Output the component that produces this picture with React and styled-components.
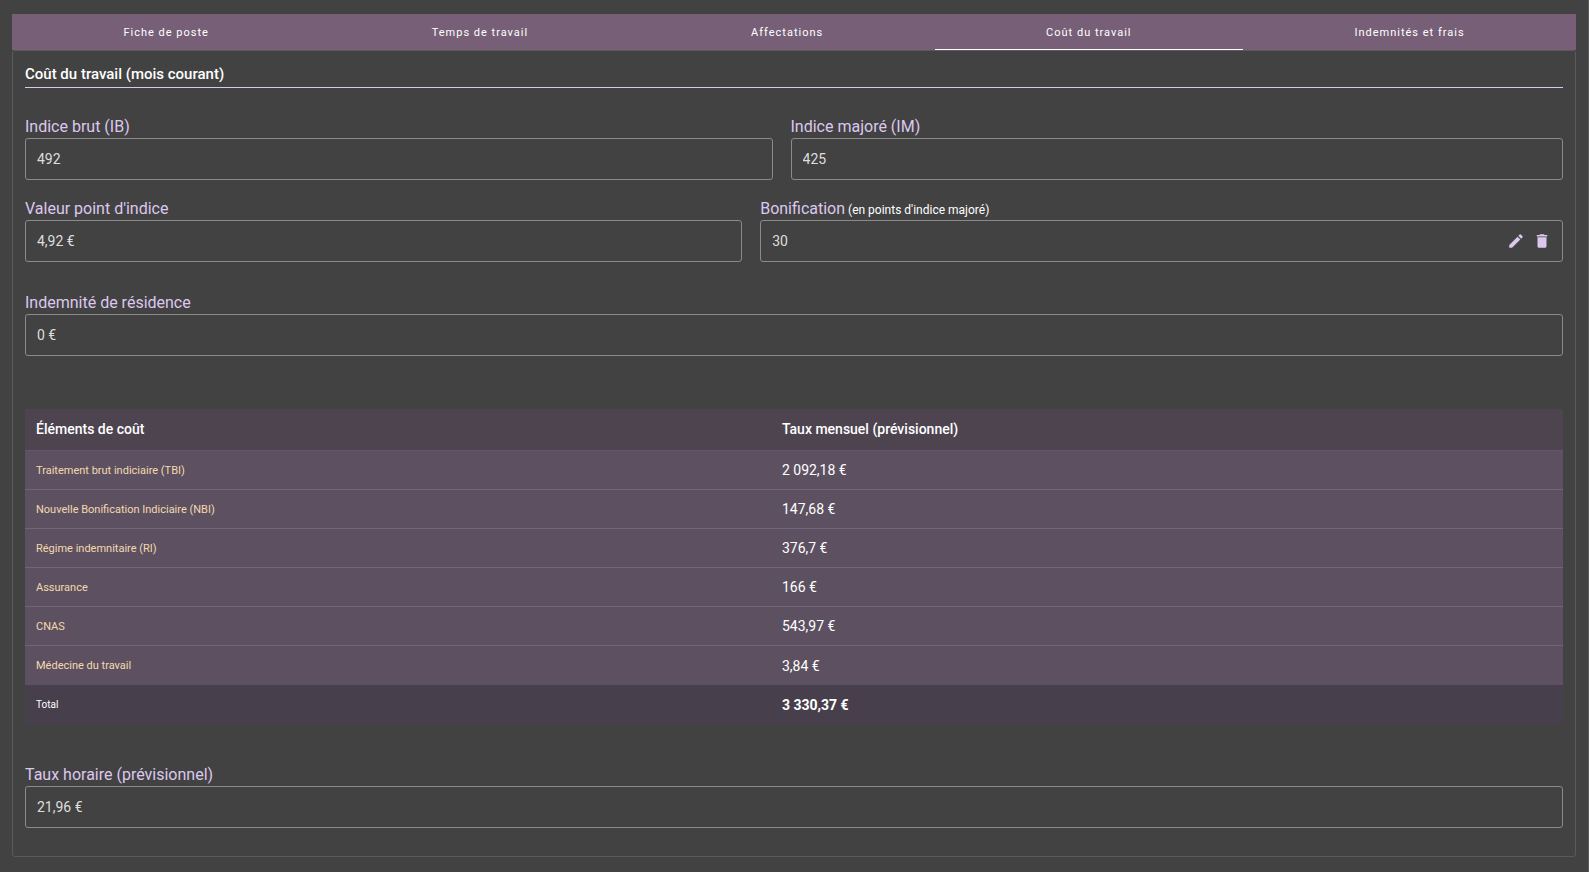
import { useState } from 'react';
import styled, { createGlobalStyle } from 'styled-components';
import { MdDelete, MdEdit } from 'react-icons/md';

const tabs = [
	'Fiche de poste',
	'Temps de travail',
	'Affectations',
	'Coût du travail',
	'Indemnités et frais',
];

const costs = [
	{ name: 'Traitement brut indiciaire (TBI)', amount: '2 092,18 €' },
	{ name: 'Nouvelle Bonification Indiciaire (NBI)', amount: '147,68 €' },
	{ name: 'Régime indemnitaire (RI)', amount: '376,7 €' },
	{ name: 'Assurance', amount: '166 €' },
	{ name: 'CNAS', amount: '543,97 €' },
	{ name: 'Médecine du travail', amount: '3,84 €' },
];

const Field = ({ id, label, hint, value, children }) => {
	return (
		<FieldWrapper>
			<Label htmlFor={id}>
				{label}
				{hint && <Hint> {hint}</Hint>}
			</Label>
			<InputBox>
				<Input id={id} type='text' value={value} readOnly />
				{children}
			</InputBox>
		</FieldWrapper>
	);
};

const App = () => {
	const [activeTab, setActiveTab] = useState('Coût du travail');

	return (
		<Wrapper>
			<GlobalStyle />
			<TabBar role='tablist'>
				{tabs.map((tab) => (
					<Tab
						key={tab}
						type='button'
						role='tab'
						aria-selected={tab === activeTab}
						$active={tab === activeTab}
						onClick={() => setActiveTab(tab)}
					>
						{tab}
					</Tab>
				))}
			</TabBar>
			<Panel role='tabpanel'>
				<Title>Coût du travail (mois courant)</Title>
				<FieldRow>
					<Field id='ib' label='Indice brut (IB)' value='492' />
					<Field id='im' label='Indice majoré (IM)' value='425' />
				</FieldRow>
				<FieldRow>
					<Field id='point' label="Valeur point d'indice" value='4,92 €' />
					<Field
						id='bonification'
						label='Bonification'
						hint="(en points d'indice majoré)"
						value='30'
					>
						<IconButton type='button' aria-label='Modifier'>
							<MdEdit />
						</IconButton>
						<IconButton type='button' aria-label='Supprimer'>
							<MdDelete />
						</IconButton>
					</Field>
				</FieldRow>
				<FieldRow $spaced>
					<Field id='residence' label='Indemnité de résidence' value='0 €' />
				</FieldRow>
				<Table>
					<thead>
						<tr>
							<th scope='col'>Éléments de coût</th>
							<th scope='col'>Taux mensuel (prévisionnel)</th>
						</tr>
					</thead>
					<tbody>
						{costs.map(({ name, amount }) => (
							<tr key={name}>
								<th scope='row'>{name}</th>
								<td>{amount}</td>
							</tr>
						))}
					</tbody>
					<tfoot>
						<tr>
							<th scope='row'>Total</th>
							<td>3 330,37 €</td>
						</tr>
					</tfoot>
				</Table>
				<Field
					id='horaire'
					label='Taux horaire (prévisionnel)'
					value='21,96 €'
				/>
			</Panel>
		</Wrapper>
	);
};

const GlobalStyle = createGlobalStyle`
	* {
		box-sizing: border-box;
	}
	body {
		margin: 0;
		background: #424242;
		color: #fff;
		font-family: Roboto, sans-serif;
		font-size: 14px;
	}
	button,
	input {
		font-family: inherit;
	}
`;

const Wrapper = styled.main`
	min-height: 100vh;
	padding: 14px 12px;
	border-right: 1px solid #5a5a5a;
`;

const TabBar = styled.div`
	display: flex;
	background: #775f77;
`;

const Tab = styled.button`
	flex: 1 1 auto;
	height: 36px;
	padding: 0;
	border: 0;
	box-shadow: ${({ $active }) => ($active ? 'inset 0 -1px #fff' : 'none')};
	background: transparent;
	color: #fff;
	font-size: 11px;
	font-weight: 400;
	letter-spacing: 1px;
	cursor: pointer;
`;

const Panel = styled.section`
	padding: 12px 12px 28px;
	border: 1px solid #5a5a5a;
	border-radius: 3px;
`;

const Title = styled.h1`
	margin: 0 0 28px;
	padding-bottom: 2px;
	border-bottom: 1px solid #dcc8ee;
	font-size: 15px;
	font-weight: 500;
	line-height: 22px;
`;

const FieldRow = styled.div`
	display: flex;
	gap: 18px;
	margin-bottom: 18px;
	${({ $spaced }) => $spaced && 'margin: 30px 0 53px;'}
`;

const FieldWrapper = styled.div`
	flex: 1 1 auto;
`;

const Label = styled.label`
	display: block;
	color: #dcc8ee;
	font-size: 16px;
	line-height: 22px;
`;

const Hint = styled.span`
	color: #fff;
	font-size: 12px;
	line-height: 1;
`;

const InputBox = styled.div`
	display: flex;
	align-items: center;
	gap: 8px;
	height: 42px;
	padding: 0 11px;
	border: 1px solid #8a8a8a;
	border-radius: 3px;
`;

const Input = styled.input`
	flex: 1;
	width: 0;
	padding: 0;
	border: 0;
	outline: 0;
	background: transparent;
	color: #dedede;
	font-size: 14px;
`;

const IconButton = styled.button`
	display: flex;
	padding: 0;
	border: 0;
	background: transparent;
	color: #dcc8ee;
	font-size: 18px;
	cursor: pointer;
`;

const Table = styled.table`
	width: 100%;
	margin-bottom: 40px;
	border-spacing: 0;
	table-layout: fixed;
	th,
	td {
		height: 39px;
		padding: 0 11px;
		text-align: left;
	}
	th:first-child {
		width: 48.5%;
	}
	thead th {
		height: 42px;
		padding-bottom: 2px;
		border-bottom: 1px solid #625668;
		background: #4d4450;
		font-size: 14px;
		font-weight: 500;
	}
	tbody {
		background: #5d5161;
	}
	tbody tr:not(:last-child) > * {
		border-bottom: 1px solid #72657a;
	}
	tbody th {
		color: #f3d9ae;
		font-size: 11px;
		font-weight: 400;
	}
	tfoot {
		background: #483f4c;
	}
	tfoot th {
		font-size: 10px;
		font-weight: 400;
	}
	tfoot td {
		font-weight: 700;
	}
`;

export default App;
